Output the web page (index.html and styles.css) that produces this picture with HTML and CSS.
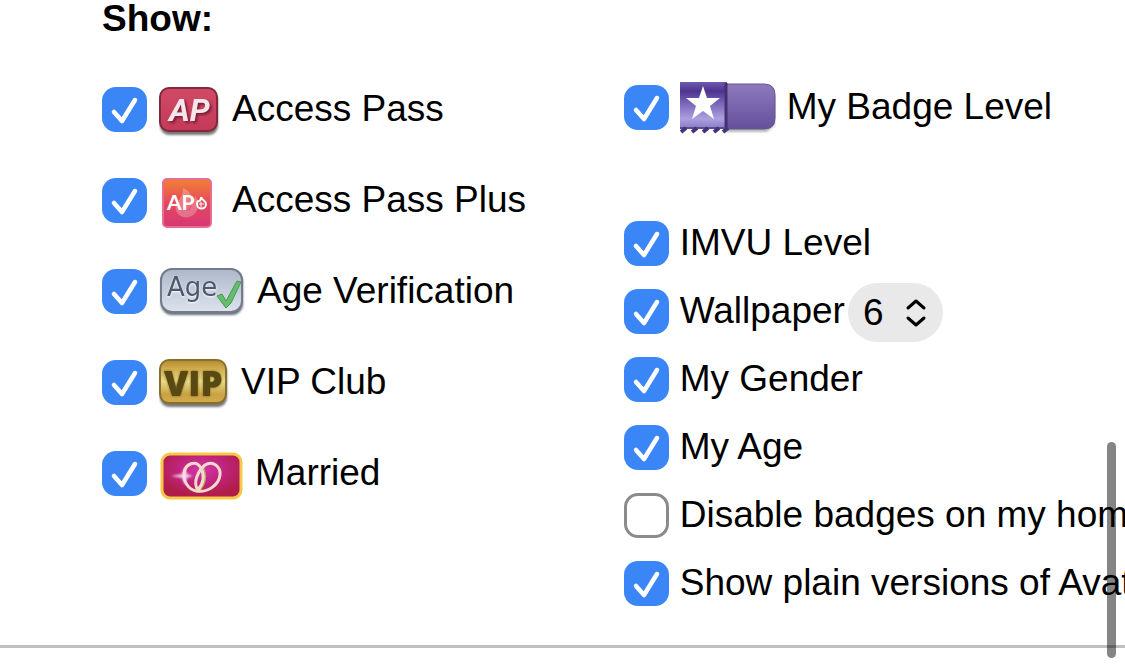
FILE: index.html
```html
<!DOCTYPE html>
<html lang="en">
<head>
  <meta charset="utf-8">
  <title>Badge Settings</title>
  <link rel="stylesheet" href="styles.css">
</head>
<body>
  <form class="settings">
    <h1>Show:</h1>
    <div class="columns">
      <div class="column badges">
        <label class="option">
          <input type="checkbox" checked>
          <svg width="61" height="55" viewBox="0 0 61 55" aria-hidden="true">
            <defs>
              <linearGradient id="ap-fill" x1="0" y1="0" x2="0" y2="1">
                <stop offset="0" stop-color="#d04a66"/>
                <stop offset="1" stop-color="#c43a58"/>
              </linearGradient>
              <filter id="soft" x="-20%" y="-20%" width="140%" height="150%"><feGaussianBlur stdDeviation="1"/></filter>
            </defs>
            <rect x="1" y="9" width="58" height="44" rx="9" fill="#777" filter="url(#soft)"/>
            <rect x="1" y="6" width="57" height="43" rx="9" fill="url(#ap-fill)" stroke="#80283c" stroke-width="2"/>
            <text class="ap-text" x="10" y="39" fill="#f6e6ea">AP</text>
          </svg>
          <span>Access Pass</span>
        </label>
        <label class="option">
          <input type="checkbox" checked>
          <svg width="61" height="55" viewBox="0 0 61 55" aria-hidden="true">
            <defs>
              <linearGradient id="app-fill" x1="0" y1="0" x2="0" y2="1">
                <stop offset="0" stop-color="#f18035"/>
                <stop offset="0.5" stop-color="#e5485a"/>
                <stop offset="1" stop-color="#d63878"/>
              </linearGradient>
            </defs>
            <rect x="4" y="6" width="48" height="48" rx="4" fill="url(#app-fill)" stroke="#e66f91" stroke-width="2"/>
            <path d="M24 15c7 3 9 8 9 13 2-1 3-3 3-5 4 5 4 12 1 16-5 8-18 7-20-2-2-8 7-10 7-22z" fill="#fff" opacity="0.25"/>
            <path d="M30 27c3 4-1 8-3 11 5 0 8-5 3-11z" fill="#e25170" opacity="0.6"/>
            <text class="plus-text" x="8" y="37" fill="#fff">AP</text>
            <path d="M42 24c1 3 5 4 5 7a4 4 0 0 1-9 0c0-2 1-3 2-3 2 0 2-2 2-4z" fill="none" stroke="#fff" stroke-width="2"/>
            <path d="M42 29v5M40 31h5" stroke="#fff" stroke-width="1"/>
          </svg>
          <span>Access Pass Plus</span>
        </label>
        <label class="option">
          <input type="checkbox" checked>
          <svg width="86" height="55" viewBox="0 0 86 55" aria-hidden="true">
            <defs>
              <linearGradient id="age-fill" x1="0" y1="0" x2="0" y2="1">
                <stop offset="0" stop-color="#adb8c8"/>
                <stop offset="0.5" stop-color="#c5cddc"/>
                <stop offset="1" stop-color="#dce3ed"/>
              </linearGradient>
            </defs>
            <rect x="2" y="7" width="82" height="44" rx="11" fill="#68707c" filter="url(#soft)"/>
            <rect x="2" y="5" width="81" height="43" rx="11" fill="url(#age-fill)" stroke="#727b88" stroke-width="2"/>
            <text class="age-text" x="8" y="32" fill="#4e586c">Age</text>
            <path d="M58 32l5-2 4 7L78 17l4 1-10 21-5 5z" fill="#66bd6c" stroke="#459a50" stroke-width="1"/>
          </svg>
          <span>Age Verification</span>
        </label>
        <label class="option">
          <input type="checkbox" checked>
          <svg width="70" height="55" viewBox="0 0 70 55" aria-hidden="true">
            <defs>
              <linearGradient id="vip-fill" x1="0" y1="0" x2="0" y2="1">
                <stop offset="0" stop-color="#b48b2c"/>
                <stop offset="0.2" stop-color="#cfac4c"/>
                <stop offset="0.5" stop-color="#e8d985"/>
                <stop offset="0.8" stop-color="#c9a145"/>
                <stop offset="1" stop-color="#d6ac48"/>
              </linearGradient>
            </defs>
            <rect x="1" y="8" width="67" height="44" rx="9" fill="#777" filter="url(#soft)"/>
            <rect x="1" y="5" width="66" height="43" rx="9" fill="url(#vip-fill)" stroke="#86702f" stroke-width="2"/>
            <text class="vip-text" x="5" y="41" fill="#584812">VIP</text>
          </svg>
          <span>VIP Club</span>
        </label>
        <label class="option">
          <input type="checkbox" checked>
          <svg width="84" height="55" viewBox="0 0 84 55" aria-hidden="true">
            <defs>
              <radialGradient id="ring-fill" cx="0.5" cy="0.35" r="0.6">
                <stop offset="0" stop-color="#d336aa"/>
                <stop offset="0.55" stop-color="#bd2377"/>
                <stop offset="1" stop-color="#b01d48"/>
              </radialGradient>
            </defs>
            <rect x="3" y="8" width="79" height="44" rx="8" fill="url(#ring-fill)" stroke="#f7c747" stroke-width="3"/>
            <path d="M43 22c4 8 2 16-3 21" fill="none" stroke="#b4a566" stroke-width="4"/>
            <path d="M37 45c-8-2-13-10-12-18 1-9 12-14 17-5 4 8 2 16-3 22" fill="none" stroke="#f5dbc9" stroke-width="3"/>
            <path d="M39 44c-6-8 1-20 7-25 8-5 16 2 15 10-1 9-11 18-24 16" fill="none" stroke="#f4d9cc" stroke-width="3"/>
            <path d="M12 30l11-2 3-7 2 7 6 2-6 2-2 7-3-7z" fill="#fbd9ef" opacity="0.9" filter="url(#soft)"/>
          </svg>
          <span>Married</span>
        </label>
      </div>

      <div class="column details">
        <label class="option badge-level">
          <input type="checkbox" checked>
          <svg width="96" height="55" viewBox="0 0 96 55" aria-hidden="true">
            <defs>
              <linearGradient id="level-left" x1="0" y1="0" x2="0" y2="1">
                <stop offset="0" stop-color="#6f5aae"/>
                <stop offset="0.2" stop-color="#4c3490"/>
                <stop offset="0.45" stop-color="#7763b5"/>
                <stop offset="0.8" stop-color="#aca0e0"/>
                <stop offset="1" stop-color="#8c7cc6"/>
              </linearGradient>
              <linearGradient id="level-right" x1="0" y1="0" x2="0" y2="1">
                <stop offset="0" stop-color="#8c7abd"/>
                <stop offset="1" stop-color="#65509c"/>
              </linearGradient>
            </defs>
            <path d="M45 8h42l8 8v29l-8 7H45z" fill="#888" opacity="0.6" filter="url(#soft)"/>
            <path d="M46 4h38q11 0 11 11v23q0 11-11 11H46z" fill="url(#level-right)" stroke="#66548f" stroke-width="1"/>
            <rect x="0" y="2" width="47" height="46" fill="url(#level-left)"/>
            <path d="M46 3v45" stroke="#44306f" stroke-width="3"/>
            <path d="M0 48h48" stroke="#5d4b98" stroke-width="2"/>
            <path d="M1 52l5-4M12 52l5-4M23 52l5-4M34 52l5-4M43 52l5-4" stroke="#44347a" stroke-width="4"/>
            <path d="M23 6l4 12h13l-10 8 4 13-11-8-11 8 4-13-10-8h13z" fill="#fff"/>
          </svg>
          <span>My Badge Level</span>
        </label>
        <label class="option">
          <input type="checkbox" checked>
          <span>IMVU Level</span>
        </label>
        <div class="option wallpaper">
          <input type="checkbox" id="wallpaper" checked>
          <label for="wallpaper"><span>Wallpaper</span></label>
          <div class="picker">
            <select aria-label="Wallpaper number">
              <option>1</option>
              <option>2</option>
              <option>3</option>
              <option>4</option>
              <option>5</option>
              <option selected>6</option>
            </select>
            <svg class="arrows" width="22" height="30" viewBox="0 0 22 30" aria-hidden="true">
              <path d="M3 10l8-7 8 7M3 20l8 7 8-7" fill="none" stroke="#000" stroke-width="3" stroke-linecap="round" stroke-linejoin="round"/>
            </svg>
          </div>
        </div>
        <label class="option">
          <input type="checkbox" checked>
          <span>My Gender</span>
        </label>
        <label class="option">
          <input type="checkbox" checked>
          <span>My Age</span>
        </label>
        <label class="option">
          <input type="checkbox">
          <span>Disable badges on my homepage</span>
        </label>
        <label class="option">
          <input type="checkbox" checked>
          <span>Show plain versions of Avatar</span>
        </label>
      </div>
    </div>
  </form>
  <hr>
  <div class="scroll-thumb"></div>
</body>
</html>
```
FILE: styles.css
```css
body {
  margin: 0;
  overflow: hidden;
  background: #fff;
  color: #000;
  font-family: Arial, "Liberation Sans", sans-serif;
  font-size: 37px;
  line-height: 42px;
}

.settings {
  padding-left: 102px;
}

h1 {
  margin: 0;
  padding-bottom: 27px;
  font-size: 37px;
  line-height: 37px;
}

.columns {
  display: grid;
  grid-template-columns: 51% 49%;
}

.column {
  min-width: 0;
}

.option {
  display: flex;
  align-items: center;
  height: 68px;
  gap: 11px;
  white-space: nowrap;
}

.option span {
  padding-bottom: 1px;
}

.option svg {
  flex: none;
}

.badges .option {
  height: 91px;
  gap: 12px;
}

.details {
  padding-top: 9px;
  overflow: hidden;
}

.badge-level {
  margin-bottom: 68px;
}

/* Checkboxes */
input[type="checkbox"] {
  appearance: none;
  flex: none;
  width: 45px;
  height: 45px;
  margin: 0;
  border: 3px solid #8b8b8e;
  border-radius: 14px;
  background: #fff;
}

input[type="checkbox"]:checked {
  border: none;
  background: #3b86f7 url("data:image/svg+xml,%3Csvg xmlns='http://www.w3.org/2000/svg' viewBox='0 0 45 45'%3E%3Cpath d='M12 25l8 9 13-21' fill='none' stroke='white' stroke-width='4.5' stroke-linecap='round' stroke-linejoin='round'/%3E%3C/svg%3E");
}

/* Wallpaper drop-down */
.picker {
  position: relative;
  margin-left: -8px;
  padding-top: 3px;
}

.picker select {
  appearance: none;
  display: block;
  width: 95px;
  height: 59px;
  padding: 0 15px;
  border: none;
  border-radius: 30px;
  background: #e9e9e9;
  color: #000;
  font: inherit;
}

.arrows {
  position: absolute;
  top: 18px;
  right: 16px;
  pointer-events: none;
}

/* Badge lettering */
.ap-text {
  font: italic bold 32px Roboto, sans-serif;
  filter: drop-shadow(2px 2px 1px #7d1e38);
}

.plus-text {
  font: bold 21px Lato, sans-serif;
}

.age-text {
  font: 26px "DejaVu Sans", sans-serif;
  filter: drop-shadow(0 1px 1px #fff);
}

.vip-text {
  font: 800 35px "Open Sans", sans-serif;
  filter: drop-shadow(0 0 1px #73601b);
}

hr {
  height: 3px;
  margin: 28px 0 0;
  border: none;
  background: #c0c0c0;
}

.scroll-thumb {
  position: fixed;
  right: 9px;
  bottom: 6px;
  width: 9px;
  height: 216px;
  border-radius: 5px;
  background: rgba(0, 0, 0, 0.48);
}
```
